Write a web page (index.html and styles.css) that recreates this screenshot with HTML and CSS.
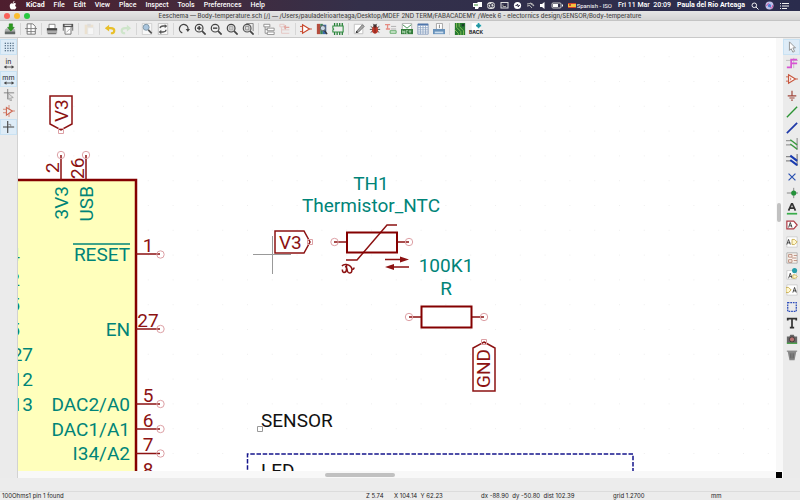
FILE: index.html
```html
<!DOCTYPE html>
<html lang="en">
<head>
<meta charset="utf-8">
<title>Eeschema — Body-temperature.sch</title>
<link rel="stylesheet" href="styles.css">
</head>
<body>
<header class="menubar">
  <nav class="menus">
    <button class="apple" aria-label="Apple menu"><svg width="8" height="9" viewBox="0 0 8 9"><path fill="#fff" d="M5.500 0c0 1-.7 1.900-1.600 1.900C3.800 1 4.600.1 5.500 0zM4 2.500c.5 0 .9-.4 1.600-.4.600 0 1.200.3 1.500.8-1.400.9-1.100 2.700.3 3.200C7 7.400 6.300 8.500 5.500 8.500c-.5 0-.8-.3-1.400-.3s-.9.3-1.400.3C1.700 8.500.7 6.700.7 5c0-1.700 1-2.800 2.100-2.800.5 0 .9.300 1.200.300z"/></svg></button>
    <button class="app">KiCad</button><button>File</button><button>Edit</button><button>View</button><button>Place</button><button>Inspect</button><button>Tools</button><button>Preferences</button><button>Help</button>
  </nav>
  <div class="tray">
    <svg width="9" height="9" viewBox="0 0 9 9"><path fill="#fff" d="M0 2h4l1-1h4v5H6L5 8H2V6H0z"/><path fill="#9fc79d" d="M1 3h4v2H1z"/></svg>
    <svg width="10" height="9" viewBox="0 0 10 9"><rect x="1" y="1" width="8" height="7" rx="3.500" fill="#ddd"/><circle cx="3.500" cy="4.800" r="1.500" fill="none" stroke="#333149"/><circle cx="6.300" cy="4.300" r="1.700" fill="none" stroke="#333149"/></svg>
    <svg width="9" height="9" viewBox="0 0 9 9"><rect x="1" y="1.500" width="7" height="5.500" fill="none" stroke="#ddd"/><path stroke="#aaa" d="M3 3.500v2h3"/></svg>
    <svg width="9" height="9" viewBox="0 0 9 9"><circle cx="4.500" cy="4.500" r="3.600" fill="#fff"/><path d="M2.500 4.500h1.300l.7-1.500.8 3 .5-1.500h1" fill="none" stroke="#333149"/></svg>
    <svg width="9" height="9" viewBox="0 0 9 9"><path d="M1 3q3-2 7 2M1 5q3-2 5 2M4 2q3 0 4 3" fill="none" stroke="#bbb"/></svg>
    <svg width="8" height="9" viewBox="0 0 8 9"><path fill="#fff" d="M1 3h2l2.500-2v7L3 6H1z"/></svg>
    <svg width="13" height="9" viewBox="0 0 13 9"><rect x="1" y="2" width="9" height="5" rx="1" fill="none" stroke="#ccc"/><path fill="#fff" d="M2 3h5v3H2zM11 3.500h1v2h-1z"/></svg>
    <svg width="9" height="9" viewBox="0 0 9 9"><path fill="#d3412d" d="M0 2h8v5H0z"/><path fill="#f1c340" d="M0 3h8v3H0z"/><path fill="#bd5535" d="M1 3h2v2H1z"/></svg>
    <span class="layout">Spanish - ISO</span><time>Fri 11 Mar&nbsp; 20:09</time><span class="user">Paula del Río Arteaga</span>
    <button class="traybtn" aria-label="Search"><svg width="8" height="8" viewBox="0 0 8 8"><circle cx="3.300" cy="3.300" r="2.300" fill="none" stroke="#eee"/><path d="M5 5l2.500 2.500" stroke="#eee"/></svg></button>
    <button class="traybtn" aria-label="Siri"><svg width="9" height="9" viewBox="0 0 9 9"><circle cx="4.500" cy="4.500" r="4" fill="#bfc1e8"/><path d="M1.500 5q2-5 3.500 0t3-1" fill="none" stroke="#d04f9e"/><circle cx="4.500" cy="4.700" r="1.600" fill="#4c7dd4"/></svg></button>
    <button class="traybtn" aria-label="Notifications"><svg width="9" height="8" viewBox="0 0 9 8"><path d="M0 1.500h1M2 1.500h7M0 4h1M2 4h7M0 6.500h1M2 6.500h5" stroke="#eee"/></svg></button>
  </div>
</header>

<div class="titlebar">
  <div class="lights"><button class="close" aria-label="Close"></button><button class="min" aria-label="Minimize"></button><button class="max" aria-label="Zoom"></button></div>
  <h1>Eeschema — Body-temperature.sch [/] — /Users/pauladelrioarteaga/Desktop/MDEF 2ND TERM/FABACADEMY /Week 6 - electornics design/SENSOR/Body-temperature</h1>
</div>

<div class="toolbar" role="toolbar" aria-label="Main">
  <button aria-label="Save"><svg viewBox="0 0 14 14"><path fill="#a9adab" d="M1 8l2-2h8l2 2v5H1z"/><path fill="#626866" d="M1 10h12v3H1z"/><path fill="#2e9b20" stroke="#14740d" stroke-width=".5" d="M6 1h4v4h2L8 9.500 4 5h2z"/></svg></button><i></i>
  <button aria-label="Page settings"><svg viewBox="0 0 14 14"><path fill="#fff" stroke="#666" d="M2.500 1h6.500l3 3v9h-9.500z"/><path d="M0 6.500h14M7 1v12M2 10h10" fill="none" stroke="#777"/></svg></button><i></i>
  <button aria-label="Print"><svg viewBox="0 0 14 14"><path fill="#fff" stroke="#777" d="M3.500 1.500h7V7h-7z"/><path fill="#444" d="M1 6h12v3H1z"/><path fill="#aaa" d="M1 9h12v3H1z"/><path stroke="#444" d="M2 12.500h10"/></svg></button>
  <button aria-label="Plot"><svg viewBox="0 0 14 14"><path fill="#555" d="M1 1h12v4H1z"/><path fill="#ddd" d="M3 2h8v1.500H3z"/><path fill="#fff" stroke="#666" d="M3.500 5v8h7V5"/><path d="M1.500 5v4M12.500 5v4" stroke="#555"/><path d="M5 11l4-4" stroke="#999"/></svg></button><i></i>
  <button aria-label="Paste"><svg viewBox="0 0 14 14" opacity=".5"><path fill="#ead7b5" d="M2 2h10v11H2z"/><path fill="#d0cfcc" d="M5 1h4v3H5z"/><path fill="#fff" stroke="#ddd" d="M5.500 5.500h7v8h-7z"/></svg></button><i></i>
  <button aria-label="Undo"><svg viewBox="0 0 14 14"><path d="M4 6h4q4 0 4 3t-4 3" fill="none" stroke="#e8bf29" stroke-width="2.500"/><path fill="#e8bf29" d="M1 6l5-4v8z"/></svg></button>
  <button aria-label="Redo"><svg viewBox="0 0 14 14" opacity=".45"><path d="M10 6H6Q2 6 2 9t4 3" fill="none" stroke="#a9dca0" stroke-width="2.500"/><path fill="#a9dca0" d="M13 6L8 2v8z"/></svg></button><i></i>
  <button aria-label="Find"><svg viewBox="0 0 14 14"><path fill="#f8f8f8" stroke="#ccc" d="M1.500.5h11v13h-11z"/><circle cx="6" cy="5" r="3.500" fill="#a9c5de" stroke="#78909f"/><path d="M8.500 8l4 4" stroke="#555" stroke-width="2"/></svg></button>
  <button aria-label="Find and replace"><svg viewBox="0 0 14 14"><path fill="#f8f8f8" stroke="#bbb" d="M1.500.5h11v13h-11z"/><path d="M3.500 6Q4 3.500 7 3.500h3M10.500 8q0 2.500-3.500 2.500H4" fill="none" stroke="#555" stroke-width="1.500"/><path fill="#555" d="M9 1.500l3 2-3 2.500zM5 8v5l-3-2.500z"/></svg></button><i></i>
  <button aria-label="Refresh"><svg viewBox="0 0 14 14"><path d="M5 11.500A5 5 0 1 1 11.500 8" fill="none" stroke="#444" stroke-width="1.500"/><path fill="#444" d="M9 7h5l-2.500 3.500z"/></svg></button>
  <button aria-label="Zoom in"><svg viewBox="0 0 14 14"><circle cx="6" cy="6" r="4.500" fill="#eee" stroke="#444" stroke-width="1.400"/><path d="M9.500 9.500l4 4" stroke="#444" stroke-width="2"/><path d="M3.500 6h5M6 3.500v5" stroke="#333" stroke-width="1.500"/></svg></button>
  <button aria-label="Zoom out"><svg viewBox="0 0 14 14"><circle cx="6" cy="6" r="4.500" fill="#eee" stroke="#444" stroke-width="1.400"/><path d="M9.500 9.500l4 4" stroke="#444" stroke-width="2"/><path d="M3.500 6h5" stroke="#333" stroke-width="1.500"/></svg></button>
  <button aria-label="Zoom to fit"><svg viewBox="0 0 14 14"><circle cx="6" cy="6" r="4.500" fill="#ddd" stroke="#444" stroke-width="1.400"/><path d="M9.500 9.500l4 4" stroke="#444" stroke-width="2"/><path d="M4 4h4v4H4z" fill="#ccc" stroke="#aaa"/></svg></button>
  <button aria-label="Zoom to selection"><svg viewBox="0 0 14 14"><path d="M5 .5h8v9" fill="none" stroke="#777"/><circle cx="6" cy="6" r="4.500" fill="#ddd" stroke="#555" stroke-width="1.400"/><path d="M9.500 9.500l4 4" stroke="#444" stroke-width="2"/><path d="M4 4h4v4H4z" fill="none" stroke="#888"/></svg></button><i></i>
  <button aria-label="Navigate hierarchy"><svg viewBox="0 0 14 14"><path d="M1 1.500h7v3H1zM5 6h8v3H5zM5 10.500h8v3H5zM2.500 4.500V12H5M2.500 7.500H5" fill="#fff" stroke="#888"/></svg></button>
  <button aria-label="Leave sheet"><svg viewBox="0 0 14 14" opacity=".55"><path d="M1 1.500h5v3H1zM3 5v7h9M3 8h9" fill="none" stroke="#e0a19b"/><path d="M6 5h6M6 5l2-2M6 5l2 2" fill="none" stroke="#d96c61" stroke-width="1.500"/></svg></button><i></i>
  <button aria-label="Symbol editor"><svg viewBox="0 0 14 14"><path d="M3 2l8 5-8 5z" fill="#fff" stroke="#c8482d" stroke-width="1.400"/><path d="M0 4h3M0 10h3M11 7h3" stroke="#c8482d"/></svg></button>
  <button aria-label="Symbol libraries"><svg viewBox="0 0 14 14"><path fill="#b44d3e" d="M1 1h4v12H1z"/><path fill="#378154" d="M5 1h3v12H5z"/><path fill="#3b68a8" d="M8 2h4v11H8z"/><circle cx="8" cy="6" r="3" fill="#c9d9e8" stroke="#555"/><path d="M10 9l3 4" stroke="#333" stroke-width="1.500"/></svg></button>
  <button aria-label="Footprint editor"><svg viewBox="0 0 14 14"><path d="M3 0v14M6 0v14M9 0v14M12 0v14" stroke="#267d37" stroke-width="1.500"/><path fill="#eee" stroke="#338f43" stroke-width="1.300" d="M1 3.500h12v7H1V8q2-1 0-2z"/></svg></button><i></i>
  <button aria-label="Annotate"><svg viewBox="0 0 14 14"><path fill="#fff" stroke="#bbb" d="M1.500 1.500h10v11h-10z"/><path d="M4 10l7-8 2 2-7 7z" fill="#aaa" stroke="#666"/><path fill="#333" d="M3 12l1-3 2 2z"/></svg></button>
  <button aria-label="Electrical rules check"><svg viewBox="0 0 14 14"><path d="M2 4l10 7M12 4L2 11M1 7.500h12M5 1l2 3 2-3" stroke="#444" fill="none"/><ellipse cx="7" cy="8" rx="3.500" ry="4.500" fill="#be3a2a"/><circle cx="7" cy="3.500" r="2" fill="#433"/><path d="M7 4v8" stroke="#722"/></svg></button>
  <button aria-label="Assign footprints"><svg viewBox="0 0 14 14"><path d="M0 2h6M3 2v5M1 7h5" stroke="#e58c83" fill="none" stroke-width="1.500"/><path d="M7 4h6M7 7h6" stroke="#aaa"/><path d="M6 9h7v3H6z" fill="#d1e9d2" stroke="#57a45e"/></svg></button>
  <button aria-label="Generate netlist"><svg viewBox="0 0 14 14"><path fill="#fff" stroke="#aaa" d="M1.500.5h11v8h-11z"/><path d="M2 2l5 4 5-4" fill="none" stroke="#338844"/><path fill="#327c3a" d="M0 7h14v6H0z"/><path d="M2 12V9l2 3V9M8 9H6v3h2M9 9.500h3M10.500 9v3" fill="none" stroke="#b8ddb9"/></svg></button>
  <button aria-label="Symbol fields"><svg viewBox="0 0 14 14"><path fill="#fff" stroke="#7c93b8" d="M1 1h12v12H1z"/><path fill="#4f76ac" d="M1 1h12v2H1z"/><path d="M1 5.500h12M1 8h12M1 10.500h12M4 3v10M7 3v10M10 3v10" stroke="#8fa5c3"/></svg></button>
  <button aria-label="Bill of materials"><svg viewBox="0 0 14 14"><path fill="#fff" stroke="#999" d="M4 .5h7v7H4z"/><path d="M7.500 2v4" stroke="#777"/><path fill="#6792bb" d="M0 7h14v6H0z"/><path d="M2 11h10" stroke="#cadced" stroke-width="2"/></svg></button><i></i>
  <button aria-label="Board editor"><svg viewBox="0 0 14 14"><path fill="#267a31" d="M1 0h12v14H1z"/><path d="M3 0v5l5 5v4M6 0v4l5 5v5M1 8l4 4v2" fill="none" stroke="#8fc557"/><path fill="#163f25" d="M9 1h3v3H9z"/></svg></button>
  <button class="back" aria-label="Import footprint associations"><svg viewBox="0 0 14 8"><path fill="#fff" d="M2 0h10v8H2z"/><path fill="#21a5b2" d="M7 2h2V0h2v2h2v2h-2v2H9V4H7z"/><circle cx="10" cy="3" r="2" fill="#25949e"/></svg><b>BACK</b></button>
</div>

<main class="workspace">
  <div class="side left" role="toolbar" aria-label="Display">
    <button class="on" aria-label="Grid"><svg viewBox="0 0 14 14"><path d="M2 2.500h11M2 5.500h11M2 8.500h11M2 11.500h11" stroke="#33506b" stroke-width="1.200" stroke-dasharray="1.500 1.500"/></svg></button>
    <button class="unit" aria-label="Inches">in<svg viewBox="0 0 14 4"><path d="M2 2h10" stroke="#444"/><path fill="#444" d="M1 2l3-2v4zM13 2l-3-2v4z"/></svg></button>
    <button class="unit on" aria-label="Millimetres">mm<svg viewBox="0 0 14 4"><path d="M2 2h10" stroke="#444"/><path fill="#444" d="M1 2l3-2v4zM13 2l-3-2v4z"/></svg></button>
    <button aria-label="Cursor shape"><svg viewBox="0 0 14 14"><path d="M5.500 0v12M1 4.500h12" stroke="#777"/><path d="M6 5l6 5-3 .5 1 3-1.500.5-1-3L6 12z" fill="#ddd" stroke="#888" stroke-width=".7"/></svg></button>
    <button aria-label="Hidden pins"><svg viewBox="0 0 14 14"><path d="M4 3l7 4-7 5z" fill="none" stroke="#cf6751" stroke-width="1.300"/><path d="M0 5h4M0 9h4M11 7h3M7 0v5M7 10v4" stroke="#cf7f6b"/></svg></button>
    <button class="on" aria-label="Orthogonal wires"><svg viewBox="0 0 14 14"><path d="M5.500 0v14M0 7h13" stroke="#444" stroke-width="1.300"/><path d="M6 4h3v3" fill="none" stroke="#888"/></svg></button>
  </div>

  <section class="canvas" aria-label="Schematic">
    <svg class="sheet" role="img" aria-label="Schematic sheet">
      <defs>
        <pattern id="dots" width="24.800" height="24.800" x="247" y="6.600" patternUnits="userSpaceOnUse"><path class="dot" d="M0 0h1v1H0z"/></pattern>
      </defs>
      <g transform="translate(-18 -38)">
        <rect x="18" y="38" width="3000" height="3000" fill="url(#dots)"/>
        <rect class="chip" x="-100" y="180" width="236" height="2000"/>
        <g class="wire">
          <path d="M61 155v25M86 155v25M136 254h24M136 329h24M136 404h24M136 429h24M136 453.500h24M136 478h24"/>
          <path d="M50 96h22v28l-11 6-11-6zM275 231h29l6 11-6 11h-29zM484 342l11 6v43h-22v-43z"/>
          <path d="M334 242h13M397 242h12M409 317h13M472 317h12"/>
          <path d="M346 260h11l30-35h10M385 259.500h20M389 267h20"/>
          <path d="M342 266q1.500-2 4.500-1.500 5 1 5.500 5 0 3.500-2.500 3.500-2 0-2.500-4 0-2-2-2.500M346.500 265v4q0 3.500-2.500 3.500-2-.5-1.500-3M352 269.500q2 0 2-2"/>
        </g>
        <path class="solid" d="M409 259.500l-9-3v6zM385 267l9-3v6z"/>
        <rect class="body" x="347" y="232.500" width="50" height="20"/>
        <rect class="body" x="421.500" y="306.500" width="50" height="21"/>
        <g class="end">
          <circle cx="61" cy="155" r="3.700"/><circle cx="86" cy="155" r="3.700"/><circle cx="160.500" cy="254.500" r="3.700"/><circle cx="160.500" cy="329" r="3.700"/><circle cx="160.500" cy="404" r="3.700"/><circle cx="160.500" cy="429" r="3.700"/><circle cx="160.500" cy="453.500" r="3.700"/>
          <circle cx="334.500" cy="242" r="3.700"/><circle cx="409" cy="242" r="3.700"/><circle cx="409" cy="317" r="3.700"/><circle cx="484" cy="317" r="3.700"/>
          <path d="M58.500 128.500h5v5h-5zM307.500 239.500h5v5h-5zM481.500 339.500h5v5h-5z"/>
        </g>
        <g class="red">
          <text transform="translate(68 122) rotate(-90)">V3</text>
          <text transform="translate(59 173) rotate(-90)">2</text>
          <text transform="translate(84 179) rotate(-90)">26</text>
          <text x="279" y="249">V3</text>
          <text transform="translate(490 388) rotate(-90)">GND</text>
          <g class="mid"><text x="148" y="252">1</text><text x="148" y="327">27</text><text x="148" y="402">5</text><text x="148" y="427">6</text><text x="148" y="451">7</text><text x="148" y="476">8</text></g>
        </g>
        <g class="teal">
          <g class="last">
            <text transform="translate(68 186) rotate(-90)">3V3</text><text transform="translate(93 186) rotate(-90)">USB</text>
            <text x="130" y="261">RESET</text><text x="130" y="336">EN</text><text x="130" y="411">DAC2/A0</text><text x="130" y="436">DAC1/A1</text><text x="130" y="460">I34/A2</text><text x="130" y="485">I39/A3</text>
            <text x="20" y="261">4</text><text x="20" y="286">2</text><text x="20" y="311">5</text><text x="20" y="336">5</text><text x="33" y="361">27</text><text x="33" y="386">12</text><text x="33" y="411">13</text><text x="22" y="485">5</text>
          </g>
          <path class="bar" d="M73 244h57"/>
          <g class="mid"><text x="371" y="190">TH1</text><text x="371" y="212">Thermistor_NTC</text><text x="446" y="272">100K1</text><text x="446" y="295">R</text></g>
        </g>
        <g class="note"><text x="261" y="427">SENSOR</text><text x="261" y="477">LED</text></g>
        <path class="anchor" d="M257.500 426.500h5v5h-5z"/>
        <path class="frame" d="M247.500 600V454H633V600"/>
        <path class="cross" d="M272.500 236v38M253 254.500h38"/>
      </g>
    </svg>
    <div class="vscroll"><span></span></div>
    <div class="hscroll"><span class="before"></span><span class="thumb"></span><span class="after"></span></div>
    <div class="corner"></div>
  </section>

  <div class="side right" role="toolbar" aria-label="Drawing">
    <div>
      <button class="on" aria-label="Select"><svg viewBox="0 0 14 14"><path d="M4 1l7 7H8l2 4-2 1-2-4-2 2z" fill="#fff" stroke="#888"/></svg></button>
      <button aria-label="Highlight net"><svg viewBox="0 0 14 14"><path d="M0 4h14M9 1v12" fill="none" stroke="#bbb"/><path d="M1 12h5V3h7M6 7.500h7" fill="none" stroke="#d755d3" stroke-width="2"/></svg></button>
      <button aria-label="Place symbol"><svg viewBox="0 0 14 14"><path d="M3 2l8 5-8 5z" fill="#fff" stroke="#c8583f" stroke-width="1.400"/><path d="M0 4.500h3M0 9.500h3M11 7h3M5.500 5.500v3" stroke="#c8583f"/></svg></button>
      <button aria-label="Place power port"><svg viewBox="0 0 14 14"><path d="M7 2v6M2 8h10M4 10.500h6M6 13h2" stroke="#a0463b" stroke-width="1.400"/></svg></button>
    </div>
    <div>
      <button aria-label="Wire"><svg viewBox="0 0 14 14"><path d="M1 13L13 1" stroke="#2c9434" stroke-width="1.600"/></svg></button>
      <button aria-label="Bus"><svg viewBox="0 0 14 14"><path d="M1 13L13 1" stroke="#203aa8" stroke-width="2"/></svg></button>
      <button aria-label="Wire to bus entry"><svg viewBox="0 0 14 14"><path d="M0 3h6M0 8h6M13 0v14" stroke="#999" stroke-width="1.500"/><path d="M5 2l8 6M5 7l8 6" stroke="#3b9a40" stroke-width="1.600"/></svg></button>
      <button aria-label="Bus to bus entry"><svg viewBox="0 0 14 14"><path d="M0 3h6M0 8h6M13 0v14" stroke="#888" stroke-width="1.500"/><path d="M5 2l8 6M5 7l8 6" stroke="#193bb0" stroke-width="2.500"/></svg></button>
    </div>
    <div>
      <button aria-label="No connect"><svg viewBox="0 0 14 14"><path d="M3 3l8 8M11 3l-8 8" stroke="#2950b0" stroke-width="1.400"/></svg></button>
      <button aria-label="Junction"><svg viewBox="0 0 14 14"><path d="M1 7h13M9 1v12" stroke="#777"/><circle cx="9" cy="7" r="3" fill="#23923a"/></svg></button>
      <button aria-label="Net label"><svg viewBox="0 0 14 14"><path d="M3 9L7 0l4 9M4.500 6h5" fill="none" stroke="#333" stroke-width="2"/><path d="M1 12.500h12" stroke="#39ad4a" stroke-width="2"/></svg></button>
      <button aria-label="Global label"><svg viewBox="0 0 14 14"><path d="M1 2.500h8l4 4.500-4 4.500H1z" fill="#fff" stroke="#ad3b45" stroke-width="1.400"/><path d="M3 10l2-6 2 6M4 8h3" fill="none" stroke="#333"/></svg></button>
    </div>
    <div>
      <button aria-label="Hierarchical label"><svg viewBox="0 0 14 14"><path fill="#fff" stroke="#ccc" d="M1 1h12v12H1z"/><path d="M1 10l2-6 2 6M2 8h3" fill="none" stroke="#333"/><path d="M7 4h3l3 3-3 3H7z" fill="#fff7cf" stroke="#c5a849"/></svg></button>
      <button aria-label="Hierarchical sheet"><svg viewBox="0 0 14 14"><path fill="#faf5ef" stroke="#aaa" d="M1 1h12v12H1z"/><path d="M3 3h4v3H3zM3 9h4v3H3zM9 4h4M9 10h4M7 7h5" fill="none" stroke="#b58272"/></svg></button>
      <button aria-label="Import sheet pin"><svg viewBox="0 0 14 14"><path fill="#fff" stroke="#ccc" d="M1 3h11v10H1z"/><path d="M3 12l2-6 2 6M4 10h3" fill="none" stroke="#444"/><path d="M8 8h3l2 2-2 2H8z" fill="#fff7cf" stroke="#c5a849"/><circle cx="10" cy="3" r="3" fill="#279eaa"/></svg></button>
      <button aria-label="Sheet pin"><svg viewBox="0 0 14 14"><path fill="#fff" stroke="#ccc" d="M1 1h12v12H1z"/><path d="M0 4h3l3 3-3 3H0z" fill="#fff7cf" stroke="#c5a849"/><path d="M8 10l2-6 2 6M9 8h3" fill="none" stroke="#333"/></svg></button>
    </div>
    <div>
      <button aria-label="Graphic lines"><svg viewBox="0 0 14 14"><path d="M2 2h10v10H2z" fill="none" stroke="#2d4dbb" stroke-width="1.500" stroke-dasharray="2 1"/></svg></button>
      <button aria-label="Text"><svg viewBox="0 0 14 14"><path d="M2 4V2h10v2M7 2v10M4.500 12.500h5" fill="none" stroke="#333" stroke-width="2"/></svg></button>
      <button aria-label="Image"><svg viewBox="0 0 14 14"><path d="M1 4h3l1-2h4l1 2h3v8H1z" fill="#666"/><circle cx="7" cy="7.500" r="3" fill="#b77272" stroke="#333"/><path d="M1 12h12" stroke="#47a247" stroke-width="1.500"/></svg></button>
      <button aria-label="Delete"><svg viewBox="0 0 14 14"><path d="M2 3h10l-2 10H4z" fill="#888"/><path d="M1 2.500h12M5 5l.5 6M9 5l-.5 6M7 5v6" stroke="#666"/></svg></button>
    </div>
  </div>
</main>

<footer class="status">
  <span>100Ohms1 pin 1 found</span><span>Z 5.74</span><span>X 104.14&nbsp; Y 62.23</span><span>dx -88.90&nbsp; dy -50.80&nbsp; dist 102.39</span><span>grid 1.2700</span><span>mm</span>
</footer>
</body>
</html>
```

FILE: styles.css
```css
* { box-sizing: border-box; }
body {
  margin: 0;
  height: 100vh;
  display: flex;
  flex-direction: column;
  overflow: hidden;
  background: #ececec;
  color: #222;
  font-family: Inter, "Liberation Sans", sans-serif;
  font-size: 6px;
}
button {
  margin: 0;
  padding: 0;
  border: 0;
  background: none;
  color: inherit;
  font: inherit;
}
svg { display: block; }

.menubar {
  display: flex;
  justify-content: space-between;
  align-items: center;
  height: 11px;
  padding: 0 11px 0 9px;
  background: linear-gradient(90deg, #4e1e2e, #442a3c 25%, #34304a 45%, #2a2c4d);
  color: #fff;
  font-family: Roboto, "Liberation Sans", sans-serif;
  font-size: 7px;
  font-weight: 500;
  line-height: 11px;
}
.menus { display: flex; gap: 9px; }
.apple { display: flex; align-items: center; }
.app, .user { font-weight: 700; }
.tray { display: flex; align-items: center; gap: 4px; white-space: nowrap; }
.layout { font-size: 6px; font-weight: 400; margin-left: -4px; }
.tray time, .user { margin-left: 2px; }
.traybtn { margin-left: 2px; }

.titlebar {
  display: grid;
  grid-template-columns: 30px 1fr 30px;
  align-items: center;
  height: 10px;
  background: linear-gradient(#e6e6e6, #d4d4d4);
  border-bottom: 1px solid #c4c4c4;
}
.titlebar h1 {
  margin: 0;
  text-align: center;
  font-size: 6px;
  line-height: 9px;
  font-weight: 500;
  color: #444;
  white-space: nowrap;
}
.lights { display: flex; gap: 4px; padding-left: 4px; }
.lights button { width: 6px; height: 6px; border-radius: 50%; }
.close { background: #f95f57; }
.min { background: #fbbd2e; }
.max { background: #28c840; }

.toolbar {
  display: flex;
  align-items: center;
  height: 17px;
  padding-left: 2px;
  border-bottom: 1px solid #c9c9c9;
  background: #ededed;
}
.toolbar button { width: 16px; }
.toolbar svg { width: 12px; height: 12px; margin: 0 auto; }
.toolbar i { width: 1px; height: 12px; margin: 0 2px; background: #d6d6d6; }
.toolbar .back svg { height: 7px; }
.back b { display: block; font-size: 5px; line-height: 5px; text-align: center; }

.workspace {
  flex: 1;
  min-height: 0;
  display: grid;
  grid-template-columns: 18px 1fr 17px;
}
.side { background: #ebebeb; padding-top: 1px; }
.left { border-right: 1px solid #d2d2d2; }
.right > div { margin-bottom: 1px; }
.side button { display: block; width: 100%; height: 16px; }
.side svg { width: 12px; height: 12px; margin: 0 auto; }
.side .on { background: #deecf7; border: 1px solid #c9e2f3; }
.side .unit { font-size: 7px; line-height: 7px; font-weight: 400; }
.side .unit svg { height: 4px; }

.canvas {
  display: grid;
  grid-template-columns: minmax(0, 1fr) 7px;
  grid-template-rows: minmax(0, 1fr) 7px;
  background: #fff;
}
.sheet { width: 100%; height: 100%; overflow: hidden; }
.vscroll, .hscroll { background: #f8f8f8; }
.vscroll { padding: 0 2px 0 1px; display: grid; grid-template-rows: 165fr 19fr 249fr; }
.vscroll span { grid-row: 2; background: #c1c1c1; border-radius: 2px; }
.hscroll { display: grid; grid-template-columns: 307fr 70fr 381fr; padding: 2px 0 1px; }
.thumb { background: #c1c1c1; border-radius: 2px; }
.corner { background: #000; margin: 1px 1px 0 0; }

.sheet text { font-family: Roboto, "Noto Sans", sans-serif; font-size: 19px; font-weight: 400; }
.dot { fill: #efefef; }
.chip { fill: #ffffbc; stroke: #840000; stroke-width: 2.500px; }
.wire { fill: none; stroke: #8c1212; stroke-width: 1.500px; }
.body { fill: none; stroke: #840000; stroke-width: 2px; }
.solid, .red { fill: #8c1212; }
.end { fill: none; stroke: #dda0a5; stroke-width: 1px; }
.teal { fill: #008478; }
.bar { stroke: #008478; stroke-width: 1.500px; }
.note { fill: #111; }
.mid { text-anchor: middle; }
.last { text-anchor: end; }
.anchor, .cross { fill: none; stroke: #999; stroke-width: 1px; }
.frame { fill: none; stroke: #15158c; stroke-width: 1.500px; stroke-dasharray: 4.500 1.700; }

.status {
  display: grid;
  grid-template-columns: 364fr 28fr 87fr 132fr 98fr 89fr;
  margin-top: 13px;
  height: 9px;
  padding-left: 2px;
  border-top: 1px solid #dcdcdc;
  line-height: 8px;
  white-space: nowrap;
}
```
